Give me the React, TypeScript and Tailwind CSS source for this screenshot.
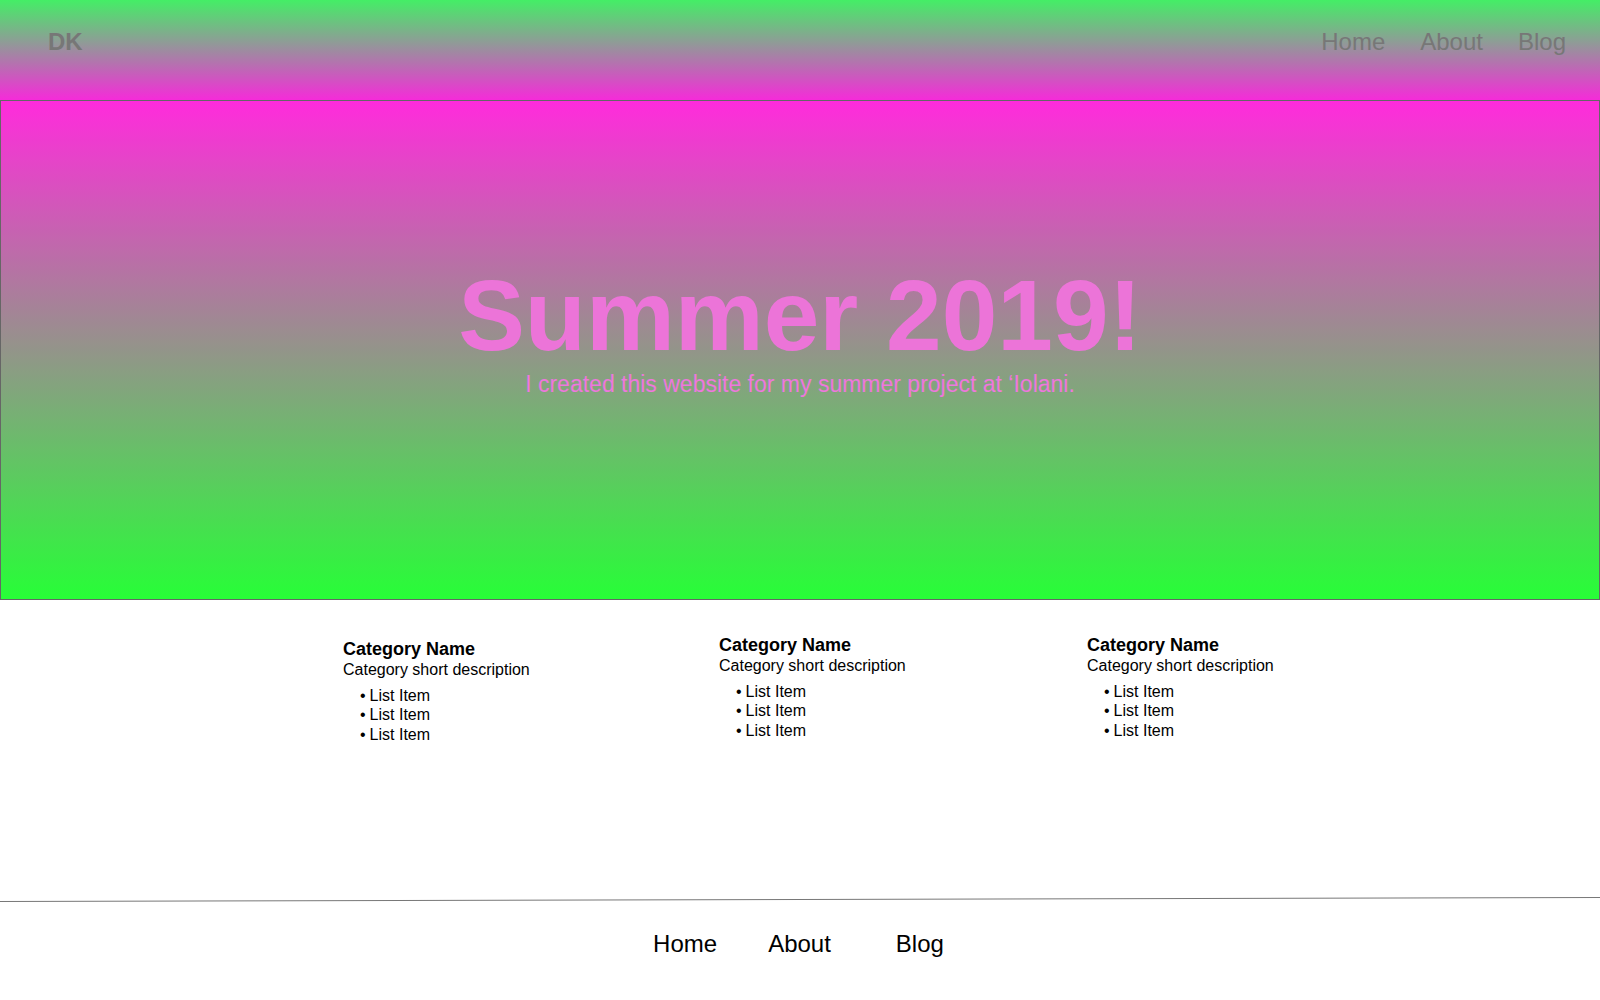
import React from "react";

const navLinks = ["Home", "About", "Blog"];

const categories = [
  { id: 1, offset: "pt-[39px]" },
  { id: 2, offset: "pt-[35px]" },
  { id: 3, offset: "pt-[35px]" },
];

const CategoryColumn: React.FC<{ offset: string; className: string }> = ({
  offset,
  className,
}) => {
  return (
    <div className={`${offset} ${className}`}>
      <h3 className="text-[18px] leading-[21px] font-bold">Category Name</h3>
      <p className="text-[16px] leading-[20px]">Category short description</p>
      <ul className="mt-[6px] pl-[17px] list-none text-[16px] leading-[19.3px]">
        {[1, 2, 3].map((n) => (
          <li key={n}>
            <span className="mr-[4px]">•</span>List Item
          </li>
        ))}
      </ul>
    </div>
  );
};

const App: React.FC<{}> = () => {
  return (
    <div
      className="w-[1600px] min-h-[1000px] bg-white text-black"
      style={{ fontFamily: '"Liberation Sans", Arial, sans-serif' }}
    >
      {/* top bar */}
      <header className="h-[100px] bg-[linear-gradient(to_bottom,#44ee66,#f52bd9)] flex items-start justify-between pt-[30px] pl-[48px] pr-[34px]">
        <div className="text-[24px] leading-none font-bold text-[#777777]">DK</div>
        <nav className="flex gap-[35px] text-[24px] leading-none text-[#777777]">
          {navLinks.map((link) => (
            <a key={link} href="#">
              {link}
            </a>
          ))}
        </nav>
      </header>

      {/* hero */}
      <section className="h-[500px] border border-[#666666] bg-[linear-gradient(to_bottom,#ff2bdc,#27fe37)] flex flex-col items-center pt-[164px]">
        <h1 className="text-[100px] leading-none font-bold text-[#ec74d8]">
          Summer 2019!
        </h1>
        <p className="mt-[8px] text-[23px] leading-none text-[#ee77dd]">
          I created this website for my summer project at ‘Iolani.
        </p>
      </section>

      {/* categories */}
      <section className="h-[297px] flex">
        <CategoryColumn offset={categories[0].offset} className="ml-[343px] w-[376px]" />
        <CategoryColumn offset={categories[1].offset} className="w-[368px]" />
        <CategoryColumn offset={categories[2].offset} className="" />
      </section>

      {/* footer */}
      <footer>
        <svg width="1600" height="6" viewBox="0 0 1600 6" className="block">
          <line x1="0" y1="4.5" x2="1600" y2="0.5" stroke="#777777" strokeWidth="1" />
        </svg>
        <nav className="flex justify-center pt-[29px] pr-[3px] text-[24px] leading-none">
          <a href="#" className="mr-[51px]">Home</a>
          <a href="#" className="mr-[65px]">About</a>
          <a href="#">Blog</a>
        </nav>
      </footer>
    </div>
  );
};

export default App;
